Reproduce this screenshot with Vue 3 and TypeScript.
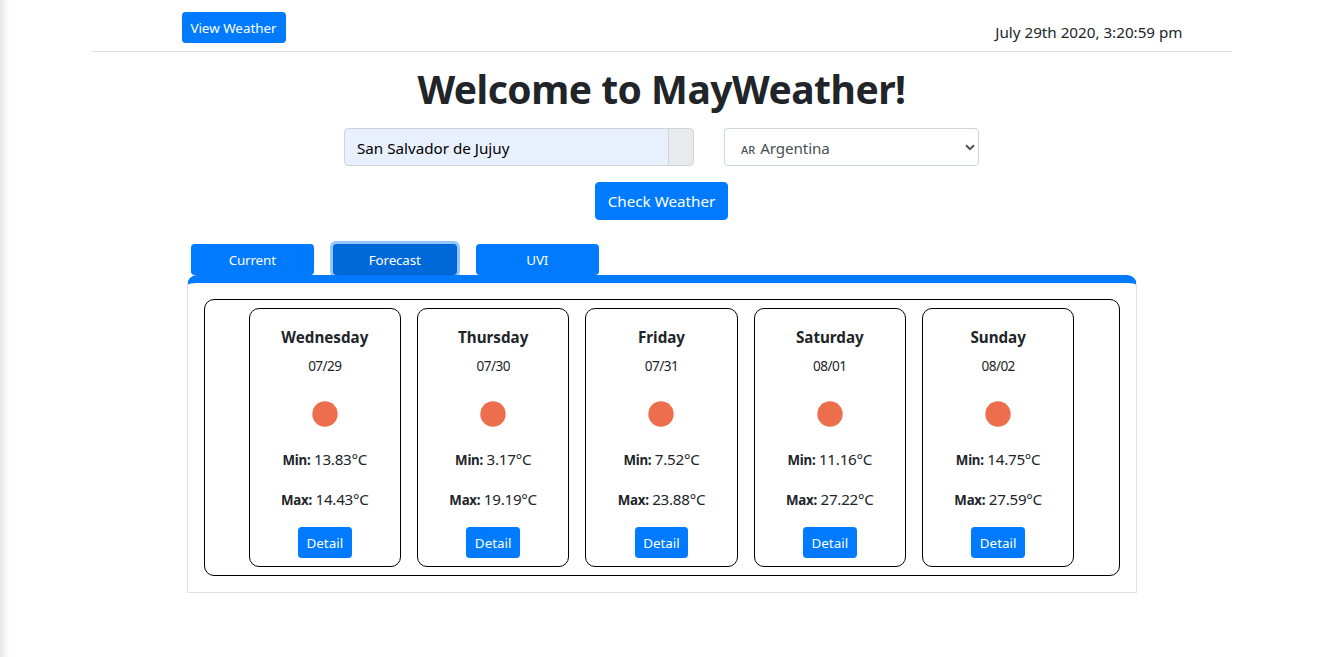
<script setup lang="ts">
import { ref } from 'vue'

interface Day {
  name: string
  date: string
  min: string
  max: string
}

const city = ref('San Salvador de Jujuy')
const tabs: string[] = ['Current', 'Forecast', 'UVI']
const active = ref('Forecast')
const days: Day[] = [
  { name: 'Wednesday', date: '07/29', min: '13.83', max: '14.43' },
  { name: 'Thursday', date: '07/30', min: '3.17', max: '19.19' },
  { name: 'Friday', date: '07/31', min: '7.52', max: '23.88' },
  { name: 'Saturday', date: '08/01', min: '11.16', max: '27.22' },
  { name: 'Sunday', date: '08/02', min: '14.75', max: '27.59' },
]
</script>

<template>
  <div class="page">
    <div class="container">
      <header class="topbar">
        <button class="btn small view">View Weather</button>
        <span class="clock">July 29th 2020, 3:20:59 pm</span>
      </header>
      <h1 class="title"><span>Welcome to MayWeather!</span></h1>
      <form class="search" @submit.prevent>
        <div class="city">
          <input v-model="city" type="text" spellcheck="false" />
          <span class="addon"></span>
        </div>
        <div class="country">
          <span class="code">AR</span>
          <span class="country-name">Argentina</span>
          <svg class="chevron" width="10" height="7" viewBox="0 0 10 7">
            <path d="M1 1.2 L5 5.2 L9 1.2" fill="none" stroke="#495057" stroke-width="2" />
          </svg>
        </div>
      </form>
      <button class="btn check">Check Weather</button>
      <nav class="tabs">
        <button
          v-for="tab in tabs"
          :key="tab"
          class="btn small tab"
          :class="{ active: tab === active }"
          @click="active = tab"
        >{{ tab }}</button>
      </nav>
      <section class="panel">
        <div class="forecast">
          <article v-for="day in days" :key="day.date" class="card">
            <h2 class="day">{{ day.name }}</h2>
            <span class="date">{{ day.date }}</span>
            <svg class="sun" width="50" height="50" viewBox="0 0 50 50">
              <circle cx="25" cy="25" r="12.7" fill="#ec6e4c" />
            </svg>
            <p class="temp"><b>Min:</b><span>{{ day.min }}°C</span></p>
            <p class="temp"><b>Max:</b><span>{{ day.max }}°C</span></p>
            <button class="btn small detail">Detail</button>
          </article>
        </div>
      </section>
    </div>
  </div>
</template>

<style>
body {
  margin: 0;
  overflow: hidden;
}
</style>

<style scoped>
* {
  box-sizing: border-box;
}
.page {
  height: 657px;
  padding-left: 4px;
  background: linear-gradient(90deg, #e6e6e6 0, #f3f3f3 4px, #fcfcfc 8px, #fff 10px);
  color: #212529;
  font: 400 15.2px/24px "Noto Sans", "Open Sans", sans-serif;
}
.container {
  width: 1140px;
  margin: 0 auto;
  display: flex;
  flex-direction: column;
  align-items: center;
}
.btn {
  border: 1px solid #007bff;
  border-radius: 4px;
  background: #007bff;
  color: #fff;
  font: inherit;
  padding: 1px 0 0;
  white-space: nowrap;
}
.small {
  height: 31px;
  border-radius: 3.2px;
  font-size: 13.4px;
  line-height: 21px;
}
.topbar {
  width: 100%;
  height: 52px;
  padding: 12px 49px 0 90px;
  border-bottom: 1px solid #dfdfdf;
  display: flex;
  justify-content: space-between;
}
.view {
  width: 104px;
}
.clock {
  padding-top: 8px;
}
.title {
  margin: 13px 0 0;
  height: 48px;
  font-size: 39px;
  line-height: 48px;
  font-weight: 700;
  letter-spacing: -0.5px;
  white-space: nowrap;
}
.search {
  margin-top: 15px;
  width: 635px;
  display: flex;
  justify-content: space-between;
}
.city {
  display: flex;
  width: 350px;
  height: 38px;
}
.city input {
  width: 325px;
  border: 1px solid #ced4da;
  border-radius: 4px 0 0 4px;
  background: #e8f0fe;
  padding: 2px 12px 0;
  font: inherit;
  color: #000;
  outline: none;
}
.addon {
  width: 26px;
  margin-left: -1px;
  border: 1px solid #ced4da;
  border-radius: 0 4px 4px 0;
  background: #e9eaee;
}
.country {
  width: 255px;
  height: 38px;
  border: 1px solid #ced4da;
  border-radius: 4px;
  padding: 2px 3px 0 16px;
  display: flex;
  align-items: center;
  color: #495057;
}
.country-name {
  letter-spacing: -0.1px;
}
.code {
  font-size: 11px;
  font-weight: 500;
  margin: 3px 5px 0 0;
}
.chevron {
  margin: -1px 0 0 auto;
}
.check {
  margin-top: 16px;
  width: 133px;
  height: 38px;
  padding-top: 0;
}
.tabs {
  width: 950px;
  margin-top: 24px;
  padding-left: 4px;
  display: flex;
  gap: 19px;
}
.tab {
  width: 123.5px;
  letter-spacing: -0.15px;
}
.tab.active {
  background: #0069d9;
  border-color: #0062cc;
  box-shadow: 0 0 0 3px #93c7ff;
}
.panel {
  position: relative;
  width: 950px;
  height: 318px;
  padding: 16px;
  border: 1px solid #dee2e6;
  border-top: 8px solid #007bff;
  border-radius: 10px 10px 0 0;
  background: #fff;
}
.forecast {
  height: 277px;
  border: 1px solid #000;
  border-radius: 10px;
  display: flex;
  justify-content: center;
  gap: 16px;
  padding-top: 8px;
}
.card {
  width: 152.33px;
  height: 259px;
  border: 1px solid #000;
  border-radius: 10px;
  display: flex;
  flex-direction: column;
  align-items: center;
}
.day {
  margin: 16px 0 0;
  font-size: 15.2px;
  line-height: 24px;
  font-weight: 700;
}
.date {
  margin-top: 6px;
  font-size: 13.6px;
  line-height: 22px;
  letter-spacing: -0.55px;
}
.sun {
  margin-top: 12px;
}
.temp {
  margin: 8px 0;
  height: 24px;
  display: flex;
  align-items: baseline;
  gap: 3.5px;
  letter-spacing: -0.25px;
}
.temp b {
  font-size: 13.3px;
}
.detail {
  width: 53.4px;
  margin-top: 8px;
}
</style>
